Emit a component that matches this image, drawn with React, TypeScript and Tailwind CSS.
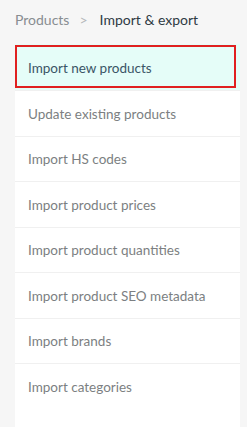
import React from "react";

const items = [
  "Import new products",
  "Update existing products",
  "Import HS codes",
  "Import product prices",
  "Import product quantities",
  "Import product SEO metadata",
  "Import brands",
  "Import categories",
];

export default function App() {
  return (
    <div
      className="min-h-[427px] w-[247px] bg-[#f6f6f6] pl-[15px] pr-[7px]"
      style={{ fontFamily: "Lato, 'Open Sans', sans-serif" }}
    >
      {/* Breadcrumb */}
      <div className="flex h-[44px] items-center pb-[6px] text-[14px]">
        <span className="text-[#888d91]">Products</span>
        <span className="ml-[10px] mr-[12px] text-[#b5b8bb]">&gt;</span>
        <span className="text-[#2f3b44]">Import &amp; export</span>
      </div>

      {/* Menu list */}
      <div className="min-h-[383px] bg-white">
        {items.map((label, i) => (
          <div
            key={label}
            className={
              i === 0
                ? "relative flex h-[46px] items-center bg-[#e5fdf8] pl-[13px] pt-[3px] text-[13.5px] text-[#3a5566]"
                : "flex h-[45.5px] items-center border-t border-[#f0f0f0] pl-[13px] pt-[1px] text-[13.5px] text-[#7c7f82]"
            }
          >
            {i === 0 && (
              <div className="absolute left-0 right-[4px] top-[1px] bottom-[2px] border-2 border-[#e02020]" />
            )}
            <span className="relative">{label}</span>
          </div>
        ))}
      </div>
    </div>
  );
}
